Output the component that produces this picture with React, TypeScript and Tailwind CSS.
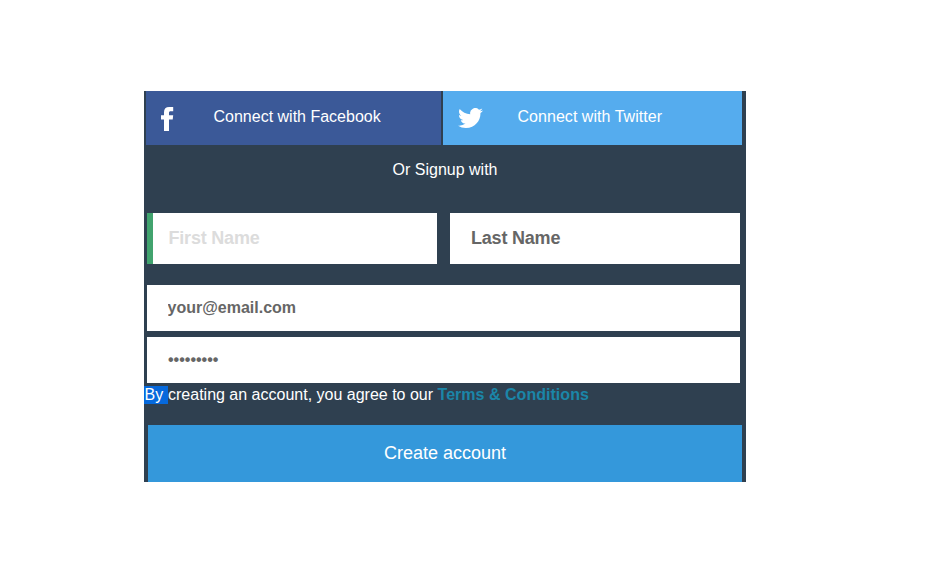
function FacebookIcon() {
  return (
    <svg className="block h-6 w-[13px] shrink-0" viewBox="0 0 13 24" fill="#fff" aria-hidden="true">
      <path d="M3 24V12.4H0V8.2h3V5.2C3 1.8 4.8 0 8.2 0H12.2v4.2H9.8C8.4 4.2 8 4.7 8 5.8v2.4h4.2L11.7 12.4H8V24z" />
    </svg>
  );
}

function TwitterIcon() {
  return (
    <svg className="block h-5 w-[25px] shrink-0" viewBox="0 2.2 24 19.6" preserveAspectRatio="none" fill="#fff" aria-hidden="true">
      <path d="M23.954 4.569a10 10 0 0 1-2.825.775 4.958 4.958 0 0 0 2.163-2.723c-.951.555-2.005.959-3.127 1.184a4.92 4.92 0 0 0-8.384 4.482C7.691 8.094 4.066 6.13 1.64 3.161a4.822 4.822 0 0 0-.666 2.475c0 1.71.87 3.213 2.188 4.096a4.904 4.904 0 0 1-2.228-.616v.061a4.923 4.923 0 0 0 3.946 4.827 4.996 4.996 0 0 1-2.212.085 4.937 4.937 0 0 0 4.604 3.417 9.868 9.868 0 0 1-6.102 2.105c-.39 0-.779-.023-1.17-.067a13.995 13.995 0 0 0 7.557 2.209c9.054 0 13.999-7.496 13.999-13.986 0-.209 0-.42-.015-.63a9.936 9.936 0 0 0 2.46-2.548z" />
    </svg>
  );
}

export default function App() {
  return (
    <main className="min-h-[571px] bg-white pt-[91px] pl-36 font-['Liberation_Sans',Arial,sans-serif] text-base text-white">
      <form className="flex h-[391px] w-[602px] flex-col bg-[#2f4050]">
        <div className="flex h-[54px] shrink-0 gap-0.5 pl-0.5">
          <button type="button" className="flex w-[295px] items-start bg-[#3b5998] pt-4 pl-[15px]">
            <FacebookIcon />
            <span className="ml-[39.5px] leading-5">Connect with Facebook</span>
          </button>
          <button type="button" className="flex w-[299px] items-start bg-[#55acee] pt-4 pl-[15px]">
            <span className="pt-px"><TwitterIcon /></span>
            <span className="ml-[34.5px] leading-5 tracking-[0.04px]">Connect with Twitter</span>
          </button>
        </div>
        <p className="mt-4 h-[18px] shrink-0 text-center leading-[18px]">Or Signup with</p>
        <div className="mt-[34px] flex shrink-0 gap-[13px] pl-[3px] text-lg font-bold tracking-[-0.2px]">
          <input
            aria-label="First Name"
            placeholder="First Name"
            className="h-[51px] w-[290px] border-l-6 border-[#41a36e] bg-white pl-[15.5px] placeholder:text-[#dcdcdc]"
          />
          <input
            aria-label="Last Name"
            placeholder="Last Name"
            className="h-[51px] w-[290px] bg-white pl-[21px] placeholder:text-[#666]"
          />
        </div>
        <div className="mt-[21px] flex shrink-0 flex-col gap-1.5 pl-[3px] font-bold text-[#666]">
          <input
            aria-label="Email"
            placeholder="your@email.com"
            className="h-[46px] w-[593px] bg-white pl-[20.5px] placeholder:text-[#666]"
          />
          <input
            aria-label="Password"
            placeholder="•••••••••"
            className="h-[46px] w-[593px] bg-white pl-[21px] placeholder:text-[#666]"
          />
        </div>
        <p className="mt-[3px] h-[18px] shrink-0 leading-[18px] whitespace-pre">
          <span className="inline-block h-[18px] w-6 bg-[#0669dc] pl-[0.5px]">By </span>creating an account, you agree to our{" "}
          <a className="font-bold tracking-[0.03px] text-[#1b86a8]">Terms &amp; Conditions</a>
        </p>
        <button type="button" className="mt-[21px] ml-1 h-[57px] w-[594px] shrink-0 bg-[#3498db] pb-0.5 text-lg">
          Create account
        </button>
      </form>
    </main>
  );
}
